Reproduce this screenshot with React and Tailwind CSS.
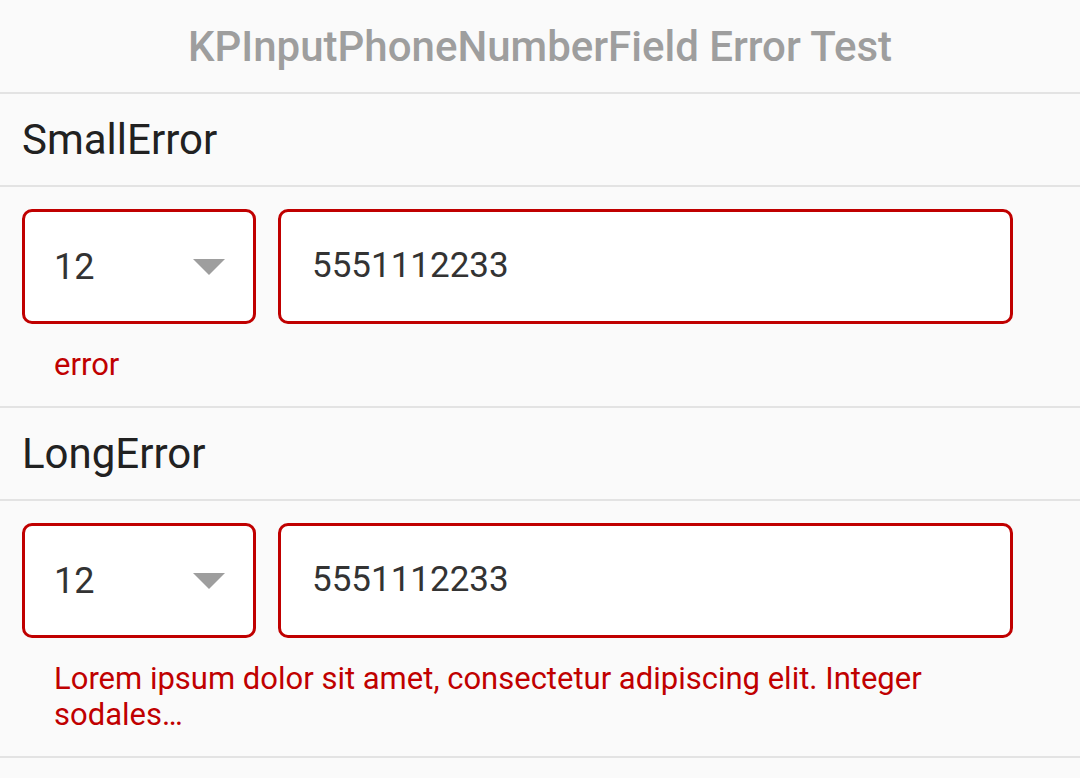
import React from "react";

const font = { fontFamily: "Roboto, 'Noto Sans', sans-serif" };

function Divider() {
  return <div className="h-[2px] bg-[#e3e3e3]" />;
}

function PhoneField({ code, number }) {
  return (
    <div className="flex gap-[22px]">
      <div className="flex h-[115px] w-[234px] items-center justify-between rounded-[10px] border-[3px] border-[#c00000] bg-white pl-[29px] pr-[28px]">
        <span className="text-[36px] text-[#333333]">{code}</span>
        <svg width="32" height="16" viewBox="0 0 32 16" className="shrink-0">
          <path d="M0 0 H32 L16 16 Z" fill="#9e9e9e" />
        </svg>
      </div>
      <div className="flex h-[115px] w-[735px] items-center rounded-[10px] border-[3px] border-[#c00000] bg-white pl-[31px]">
        <span className="text-[35px] text-[#333333]">{number}</span>
      </div>
    </div>
  );
}

function Section({ title, error }) {
  return (
    <section>
      <div className="flex h-[91px] items-center pl-[22px] text-[42px] text-[#212121]">
        {title}
      </div>
      <Divider />
      <div className="pb-[23px] pl-[22px] pt-[22px]">
        <PhoneField code="12" number="5551112233" />
        <p className="mt-[23px] w-[950px] pl-[32px] text-[31px] leading-[36px] text-[#c00000]">
          {error}
        </p>
      </div>
      <Divider />
    </section>
  );
}

export default function App() {
  return (
    <div className="min-h-screen bg-[#fafafa]" style={font}>
      <header className="flex h-[92px] items-center justify-center text-[42px] font-medium text-[#9e9e9e]">
        KPInputPhoneNumberField Error Test
      </header>
      <Divider />
      <Section title="SmallError" error="error" />
      <Section
        title="LongError"
        error="Lorem ipsum dolor sit amet, consectetur adipiscing elit. Integer sodales…"
      />
    </div>
  );
}
